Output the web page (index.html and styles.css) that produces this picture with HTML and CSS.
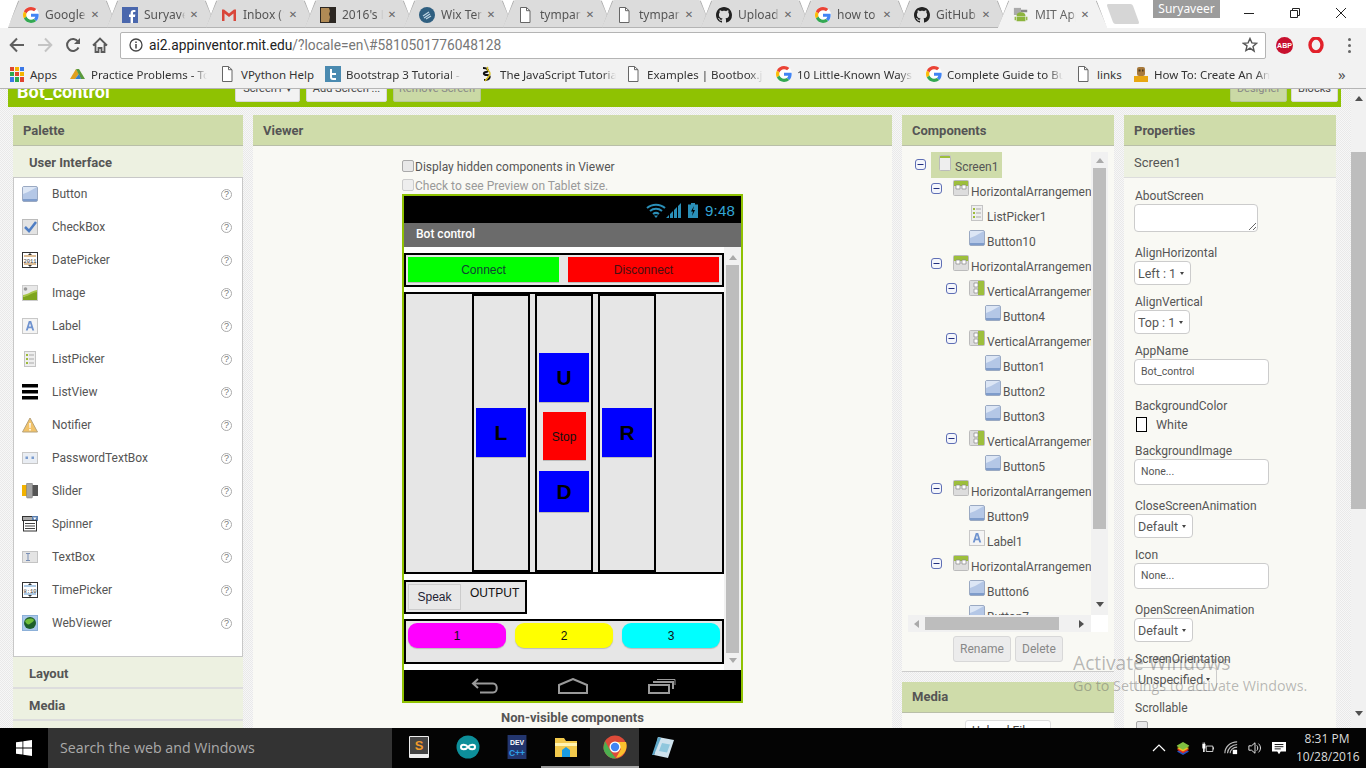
FILE: index.html
```html
<!DOCTYPE html>
<html lang="en">
<head>
<meta charset="utf-8">
<title>MIT App Inventor</title>
<link rel="stylesheet" href="styles.css">
</head>
<body>
<svg class="defs" width="0" height="0" aria-hidden="true">
  <symbol id="i-g" viewBox="0 0 48 48">
    <circle cx="24" cy="24" r="24" fill="#fff"/>
    <path fill="#EA4335" d="M24 9.5c3.54 0 6.71 1.22 9.21 3.6l6.85-6.85C35.9 2.38 30.47 0 24 0 14.62 0 6.51 5.38 2.56 13.22l7.98 6.19C12.43 13.72 17.74 9.5 24 9.5z"/>
    <path fill="#4285F4" d="M46.98 24.55c0-1.57-.15-3.09-.38-4.55H24v9.02h12.94c-.58 2.96-2.26 5.48-4.78 7.18l7.73 6c4.51-4.18 7.09-10.36 7.09-17.65z"/>
    <path fill="#FBBC05" d="M10.53 28.59c-.48-1.45-.76-2.99-.76-4.59s.27-3.14.76-4.59l-7.98-6.19C.92 16.46 0 20.12 0 24c0 3.88.92 7.54 2.56 10.78l7.97-6.19z"/>
    <path fill="#34A853" d="M24 48c6.48 0 11.93-2.13 15.89-5.81l-7.73-6c-2.15 1.45-4.92 2.3-8.16 2.3-6.26 0-11.57-4.22-13.47-9.91l-7.98 6.19C6.51 42.62 14.62 48 24 48z"/>
  </symbol>
  <symbol id="i-gh" viewBox="0 0 16 16"><path fill="#222" d="M8 0C3.58 0 0 3.58 0 8c0 3.54 2.29 6.53 5.47 7.59.4.07.55-.17.55-.38 0-.19-.01-.82-.01-1.49-2.01.37-2.53-.49-2.69-.94-.09-.23-.48-.94-.82-1.13-.28-.15-.68-.52-.01-.53.63-.01 1.08.58 1.23.82.72 1.21 1.87.87 2.33.66.07-.52.28-.87.51-1.07-1.78-.2-3.64-.89-3.64-3.95 0-.87.31-1.59.82-2.15-.08-.2-.36-1.02.08-2.12 0 0 .67-.21 2.2.82.64-.18 1.32-.27 2-.27.68 0 1.36.09 2 .27 1.53-1.04 2.2-.82 2.2-.82.44 1.1.16 1.92.08 2.12.51.56.82 1.27.82 2.15 0 3.07-1.87 3.75-3.65 3.95.29.25.54.73.54 1.48 0 1.07-.01 1.93-.01 2.2 0 .21.15.46.55.38A8.013 8.013 0 0016 8c0-4.42-3.58-8-8-8z"/></symbol>
  <symbol id="i-doc" viewBox="0 0 16 16"><path fill="#fff" stroke="#666" d="M2.500.5h6l3.500 3.200v11.800h-9.500z"/><path fill="none" stroke="#666" d="M8.500.5v3.200h3.500"/></symbol>
  <symbol id="i-fb" viewBox="0 0 16 16"><rect width="16" height="16" fill="#4a67ad"/><path fill="#fff" d="M11 16V10h2l.3-2.4H11V6.2c0-.7.3-1.1 1.2-1.1h1.2V3c-.3 0-1-.1-1.8-.1-1.8 0-3 1.1-3 3.100v1.600H7V10h1.600v6z"/></symbol>
  <symbol id="i-gm" viewBox="0 0 16 16"><path fill="#ddd" d="M1 3h14v11H1z"/><path fill="#d9473b" d="M1 2.500h2l5 4 5-4h2V14h-2.500V6.500L8 10 3.500 6.500V14H1z"/></symbol>
  <symbol id="i-2016" viewBox="0 0 16 16"><rect width="16" height="16" fill="#2c2722"/><path fill="#b08a55" d="M1 1h8l1 3-1 3 1 3-1 5H1z"/></symbol>
  <symbol id="i-wix" viewBox="0 0 16 16"><circle cx="8" cy="8" r="8" fill="#2f5f80"/><path fill="none" stroke="#bcd3e2" stroke-width="1.300" d="M4 9l6-4M5 11l6-4M7 12l5-3"/></symbol>
  <symbol id="i-droid" viewBox="0 0 18 18"><rect x="1" y="1" width="8" height="8" fill="#aaa"/><path fill="#888" d="M9 3h7v3H9z"/><path fill="#8cb43c" d="M4 10a5 4 0 0 1 10 0zM4 10.800h10V16H4zM1.800 11h1.500v4H1.800zM14.700 11h1.500v4h-1.500z"/></symbol>

  <symbol id="c-button" viewBox="0 0 16 16"><rect x=".5" y=".5" width="15" height="15" rx="1.500" fill="#b4c7e6" stroke="#9aa9c2"/><path fill="#dce6f5" d="M1 1h14L6 6 1 8z"/><path fill="#7e9ccb" d="M1 13h14v2H1z"/></symbol>
  <symbol id="c-check" viewBox="0 0 16 16"><rect x=".5" y=".5" width="15" height="15" fill="#e3e3e3" stroke="#bbb"/><path fill="none" stroke="#4f7ec4" stroke-width="2.500" d="M3 8l4 4 7-9"/></symbol>
  <symbol id="c-date" viewBox="0 0 16 16"><rect x=".5" y=".5" width="15" height="15" fill="#fff" stroke="#333"/><path stroke="#b97a2a" d="M2 4h12M2 12h12"/><path fill="#333" d="M6 3h4L8 1zM6 13h4l-2 2z"/><text x="8" y="10.500" class="svgt">2011</text></symbol>
  <symbol id="c-image" viewBox="0 0 16 16"><rect x=".5" y=".5" width="15" height="15" fill="#e8e8e8" stroke="#ccc"/><circle cx="3.500" cy="4" r="1.800" fill="#999"/><path fill="#7ea51e" d="M1 12c4-1 8-5 14-6v9H1z"/><path fill="#a8c64a" d="M1 10c4 0 8-4 14-5v2C9 8 5 12 1 12z"/></symbol>
  <symbol id="c-label" viewBox="0 0 16 16"><rect x=".5" y=".5" width="15" height="15" fill="#f4f4f4" stroke="#c8c8c8"/><path fill="#6f93cf" d="M6.800 3h2.400l3 9.500h-1.900l-.7-2.300H6.400l-.7 2.300H3.800zm1.200 2L6.900 8.500h2.200z"/></symbol>
  <symbol id="c-list" viewBox="0 0 16 16"><rect x="2.500" y=".5" width="11" height="15" fill="#eee" stroke="#c4c4c4"/><path fill="#9dbb3a" d="M4 3h2v2H4zM4 7h2v2H4zM4 11h2v2H4z"/><path fill="#aaa" d="M7 3.500h5v1H7zM7 7.500h5v1H7zM7 11.500h5v1H7z"/></symbol>
  <symbol id="c-lview" viewBox="0 0 16 16"><path fill="#000" d="M0 0h16v3.500H0zM0 6h16v3.500H0zM0 12h16v3.500H0z"/></symbol>
  <symbol id="c-notify" viewBox="0 0 16 16"><path fill="#f2c36a" stroke="#b6a27a" d="M8 1l7.500 14H.5z"/><path fill="#fff" d="M7.200 6h1.600l-.3 5h-1zM7.200 12h1.600v1.500H7.200z"/></symbol>
  <symbol id="c-pass" viewBox="0 0 16 16"><rect x=".5" y="2.500" width="15" height="11" fill="#e9edf3" stroke="#c8c8c8"/><path fill="#7a9ccf" d="M3.500 6.500h2.500v2.500H3.500zM9.500 6.500h2.500v2.500H9.500z"/></symbol>
  <symbol id="c-slider" viewBox="0 0 16 16"><path fill="#f2b200" d="M0 2h5v11H0z"/><path fill="#555" d="M10 2h6v11h-6z"/><rect x="4.500" y="0" width="6" height="15" rx="1" fill="#a4a4a4" stroke="#777" stroke-width=".5"/></symbol>
  <symbol id="c-spin" viewBox="0 0 16 16"><rect x=".5" y=".5" width="15" height="4" fill="#aaa" stroke="#333"/><rect x="10" y="0" width="6" height="5" fill="#5a7fb0"/><path fill="#fff" d="M11 1.500h3.500L12.800 4z"/><rect x="1.500" y="4.500" width="13" height="10.500" fill="#fff" stroke="#333"/><path stroke="#444" d="M3 7.500h10M3 10h10M3 12.500h10"/></symbol>
  <symbol id="c-text" viewBox="0 0 16 16"><rect x=".5" y="2.500" width="15" height="11" fill="#e4e4e4" stroke="#c4c4c4"/><path fill="none" stroke="#7a8fb5" d="M4 4.500h4M4 11.500h4M6 4.500v7"/></symbol>
  <symbol id="c-time" viewBox="0 0 16 16"><rect x=".5" y=".5" width="15" height="15" fill="#fff" stroke="#333"/><path stroke="#5b93c9" d="M2 4h12M2 12h12"/><path fill="#333" d="M6 3h4L8 1zM6 13h4l-2 2z"/><text x="8" y="10.500" class="svgt">8:10</text></symbol>
  <symbol id="c-web" viewBox="0 0 16 16"><rect x=".5" y=".5" width="15" height="15" fill="#a9c8ea" stroke="#8cb0d8"/><circle cx="8" cy="8" r="6" fill="#1e5f2a"/><path fill="#6fbe3a" d="M3 6c3-3 7-3 9-1-1 3-3 2-4 4-2 1-4 0-5-3z"/></symbol>
  <symbol id="c-harr" viewBox="0 0 16 16"><rect x=".5" y=".5" width="15" height="15" rx="1" fill="#ddd" stroke="#bbb"/><path fill="#9dbf3b" d="M1 1h14v5H1z"/><path fill="#fff" stroke="#888" stroke-width=".7" d="M3 5h4v4H3zM9 5h4v4H9z"/></symbol>
  <symbol id="c-varr" viewBox="0 0 16 16"><rect x=".5" y=".5" width="15" height="15" rx="1" fill="#ddd" stroke="#bbb"/><path fill="#9dbf3b" d="M9 1h6v14H9z"/><path fill="#fff" stroke="#888" stroke-width=".7" d="M5 3h4v4H5zM5 9h4v4H5z"/></symbol>
  <symbol id="c-screen" viewBox="0 0 12 16"><rect x=".5" y=".5" width="11" height="15" rx="1" fill="#eee" stroke="#bbb"/><path fill="#9dbf3b" d="M1 1h10v2H1z"/></symbol>
  <symbol id="t-minus" viewBox="0 0 11 11"><rect x=".5" y=".5" width="10" height="10" rx="2.500" fill="#f4f6fb" stroke="#5f6fb5"/><path stroke="#22307f" d="M2.500 5.500h6"/></symbol>
</svg>

<header class="chrome">
  <div class="tabstrip">
    <div class="tab"><svg class="fav"><use href="#i-g"/></svg><span class="tab-title">Google</span><span class="tab-x">✕</span></div>
    <div class="tab"><svg class="fav"><use href="#i-fb"/></svg><span class="tab-title">Suryaveer</span><span class="tab-x">✕</span></div>
    <div class="tab"><svg class="fav"><use href="#i-gm"/></svg><span class="tab-title">Inbox (1)</span><span class="tab-x">✕</span></div>
    <div class="tab"><svg class="fav"><use href="#i-2016"/></svg><span class="tab-title">2016's B</span><span class="tab-x">✕</span></div>
    <div class="tab"><svg class="fav"><use href="#i-wix"/></svg><span class="tab-title">Wix Temp</span><span class="tab-x">✕</span></div>
    <div class="tab"><svg class="fav"><use href="#i-doc"/></svg><span class="tab-title">tympanic</span><span class="tab-x">✕</span></div>
    <div class="tab"><svg class="fav"><use href="#i-doc"/></svg><span class="tab-title">tympanic</span><span class="tab-x">✕</span></div>
    <div class="tab"><svg class="fav"><use href="#i-gh"/></svg><span class="tab-title">Upload</span><span class="tab-x">✕</span></div>
    <div class="tab"><svg class="fav"><use href="#i-g"/></svg><span class="tab-title">how to u</span><span class="tab-x">✕</span></div>
    <div class="tab"><svg class="fav"><use href="#i-gh"/></svg><span class="tab-title">GitHub -</span><span class="tab-x">✕</span></div>
    <div class="tab tab-active"><svg class="fav"><use href="#i-droid"/></svg><span class="tab-title">MIT App</span><span class="tab-x">✕</span></div>
    <div class="newtab"></div>
    <div class="user">Suryaveer</div>
    <div class="winctl">
      <svg class="wc" viewBox="0 0 12 12"><path stroke="#222" d="M1 6.500h10"/></svg>
      <svg class="wc" viewBox="0 0 12 12"><path fill="none" stroke="#222" d="M1.500 3.500h7v7h-7zM3.500 3.500v-2h7v7h-2"/></svg>
      <svg class="wc" viewBox="0 0 12 12"><path stroke="#222" d="M1 1l10 10M11 1L1 11"/></svg>
    </div>
  </div>
  <div class="toolbar">
    <svg class="nav-ic nav-back" viewBox="0 0 16 16"><path fill="none" stroke="#5f5f5f" stroke-width="2" d="M15 8H2M8 1.500L1.700 8 8 14.500"/></svg>
    <svg class="nav-ic nav-fwd" viewBox="0 0 16 16"><path fill="none" stroke="#c4c4c4" stroke-width="2" d="M1 8h13M8 1.500L14.300 8 8 14.500"/></svg>
    <svg class="nav-ic nav-reload" viewBox="0 0 16 16"><path fill="none" stroke="#5a5a5a" stroke-width="2" d="M13.500 10.500A6 6 0 1 1 13 4.500"/><path fill="#5a5a5a" d="M15 1v6H9z"/></svg>
    <svg class="nav-ic nav-home" viewBox="0 0 16 16"><path fill="none" stroke="#5a5a5a" stroke-width="1.800" d="M1 8.500L8 1.500l7 7M3.500 7v8h3v-4h3v4h3V7"/></svg>
    <div class="omnibox">
      <svg class="info" viewBox="0 0 14 14"><circle cx="7" cy="7" r="6" fill="none" stroke="#444" stroke-width="1.300"/><path stroke="#444" stroke-width="1.500" d="M7 6v4.500M7 3.500v1.500"/></svg>
      <span class="url-host">ai2.appinventor.mit.edu</span><span class="url-rest">/?locale=en\#5810501776048128</span>
      <svg class="star" viewBox="0 0 16 16"><path fill="none" stroke="#555" stroke-width="1.400" d="M8 1.500l1.900 4.400 4.700.4-3.600 3.100 1.100 4.700L8 11.100l-4.100 2.500L5 8.900 1.400 6.300l4.700-.4z"/></svg>
    </div>
    <div class="ext">
      <span class="abp">ABP</span>
      <svg class="opera" viewBox="0 0 16 16"><ellipse cx="8" cy="8" rx="6" ry="7" fill="none" stroke="#e2212b" stroke-width="3.400"/></svg>
      <span class="menu3"><i></i><i></i><i></i></span>
    </div>
  </div>
  <div class="bookmarks">
    <div class="bm bm-apps"><span class="apps-grid"><i class="r"></i><i class="y"></i><i class="b"></i><i class="g"></i><i class="r"></i><i class="y"></i><i class="b"></i><i class="g"></i><i class="r"></i></span><span class="bm-t">Apps</span></div>
    <div class="bm bm-150"><svg class="fav" viewBox="0 0 16 16"><path fill="#e0a020" d="M0 13L6 3l3 5-4 5z"/><path fill="#5a9a3c" d="M6 3h3l6 10h-4z"/><path fill="#3b7fc4" d="M5 13l4-5 2 5z"/></svg><span class="bm-t fade">Practice Problems - Tc</span></div>
    <div class="bm bm-105"><svg class="fav"><use href="#i-doc"/></svg><span class="bm-t">VPython Help</span></div>
    <div class="bm bm-154"><svg class="fav" viewBox="0 0 16 16"><rect width="16" height="16" fill="#4a8ab0"/><path fill="none" stroke="#fff" stroke-width="2" d="M6 3v8c0 1.500 1 2 2 2h3M6 8h5"/></svg><span class="bm-t fade">Bootstrap 3 Tutorial -</span></div>
    <div class="bm bm-147"><svg class="fav" viewBox="0 0 16 16"><path fill="none" stroke="#111" stroke-width="2" d="M4 2c6 0 6 4 3 4s-3 3 1 3 4 5-3 5"/><path fill="none" stroke="#d8c020" stroke-width="1.500" d="M9 1c-3 3 3 4 2 7s-3 4-5 7"/></svg><span class="bm-t fade">The JavaScript Tutoria</span></div>
    <div class="bm bm-150"><svg class="fav"><use href="#i-doc"/></svg><span class="bm-t fade">Examples | Bootbox.js-</span></div>
    <div class="bm bm-150"><svg class="fav"><use href="#i-g"/></svg><span class="bm-t fade">10 Little-Known Ways</span></div>
    <div class="bm bm-150"><svg class="fav"><use href="#i-g"/></svg><span class="bm-t fade">Complete Guide to Bu</span></div>
    <div class="bm bm-57"><svg class="fav"><use href="#i-doc"/></svg><span class="bm-t">links</span></div>
    <div class="bm bm-190"><svg class="fav" viewBox="0 0 16 16"><path fill="#e8a712" d="M1 10h14v6H1z"/><rect x="4" y="1" width="8" height="9" rx="2" fill="#a87a3c"/><path fill="#4d3a1e" d="M5.500 3.500h2v2h-2zM9 3.500h1.500v2H9z"/></svg><span class="bm-t fade">How To: Create An An</span></div>
    <span class="chev">»</span>
  </div>
</header>

<main class="app">
  <div class="page">
    <div class="topbar">
      <span class="project">Bot_control</span>
      <span class="tb-btn tb-screen">Screen1 ▾</span>
      <span class="tb-btn tb-add">Add Screen ...</span>
      <span class="tb-btn tb-remove tb-off">Remove Screen</span>
      <span class="tb-spacer"></span>
      <span class="tb-btn tb-designer tb-off">Designer</span>
      <span class="tb-btn tb-blocks">Blocks</span>
    </div>
    <div class="columns">
      <section class="col col-palette">
        <h2 class="panel-h">Palette</h2>
        <h3 class="sec-h">User Interface</h3>
        <ul class="palette">
          <li><svg class="pi"><use href="#c-button"/></svg><span>Button</span><b class="help">?</b></li>
          <li><svg class="pi"><use href="#c-check"/></svg><span>CheckBox</span><b class="help">?</b></li>
          <li><svg class="pi"><use href="#c-date"/></svg><span>DatePicker</span><b class="help">?</b></li>
          <li><svg class="pi"><use href="#c-image"/></svg><span>Image</span><b class="help">?</b></li>
          <li><svg class="pi"><use href="#c-label"/></svg><span>Label</span><b class="help">?</b></li>
          <li><svg class="pi"><use href="#c-list"/></svg><span>ListPicker</span><b class="help">?</b></li>
          <li><svg class="pi"><use href="#c-lview"/></svg><span>ListView</span><b class="help">?</b></li>
          <li><svg class="pi"><use href="#c-notify"/></svg><span>Notifier</span><b class="help">?</b></li>
          <li><svg class="pi"><use href="#c-pass"/></svg><span>PasswordTextBox</span><b class="help">?</b></li>
          <li><svg class="pi"><use href="#c-slider"/></svg><span>Slider</span><b class="help">?</b></li>
          <li><svg class="pi"><use href="#c-spin"/></svg><span>Spinner</span><b class="help">?</b></li>
          <li><svg class="pi"><use href="#c-text"/></svg><span>TextBox</span><b class="help">?</b></li>
          <li><svg class="pi"><use href="#c-time"/></svg><span>TimePicker</span><b class="help">?</b></li>
          <li><svg class="pi"><use href="#c-web"/></svg><span>WebViewer</span><b class="help">?</b></li>
        </ul>
        <h3 class="sec-h sec-more">Layout</h3>
        <h3 class="sec-h sec-more">Media</h3>
        <h3 class="sec-h sec-more">Drawing and Animation</h3>
      </section>

      <section class="col col-viewer">
        <h2 class="panel-h">Viewer</h2>
        <div class="viewer-body">
          <label class="cbrow"><span class="cb"></span>Display hidden components in Viewer</label>
          <label class="cbrow cbrow-off"><span class="cb"></span>Check to see Preview on Tablet size.</label>
          <div class="phone">
            <div class="ph-status">
              <svg class="ph-wifi" viewBox="0 0 20 15"><path fill="none" stroke="#2a8fb8" stroke-width="2" d="M1 5c5-4.500 13-4.500 18 0M4 8c3.500-3 8.500-3 12 0M7 11c2-1.500 4-1.500 6 0"/><path fill="#2a8fb8" d="M10 15l-2-2.500h4z"/></svg>
              <svg class="ph-sig" viewBox="0 0 15 15"><path fill="#2a8fb8" d="M0 15l3-3v3zM4 15v-4l3-3v7zM8 15V7l3-3v11zM12 15V3l3-3v15z"/></svg>
              <svg class="ph-bat" viewBox="0 0 10 15"><path fill="#2a8fb8" d="M3 0h4v1.500h3V15H0V1.500h3z"/><path fill="#000" d="M6 3L3 8.500h2L4 13l3-6H5z"/></svg>
              <span class="ph-time">9:48</span>
            </div>
            <div class="ph-title">Bot control</div>
            <div class="ph-screen">
              <div class="ph-content">
                <div class="ha ha-1">
                  <span class="pb pb-green">Connect</span>
                  <span class="pb pb-red">Disconnect</span>
                </div>
                <div class="ha ha-2">
                  <div class="va va-1"><span class="pb pb-blue pb-sq">L</span></div>
                  <div class="va va-2">
                    <span class="pb pb-blue pb-u">U</span>
                    <span class="pb pb-redsq">Stop</span>
                    <span class="pb pb-blue pb-d">D</span>
                  </div>
                  <div class="va va-3"><span class="pb pb-blue pb-sq">R</span></div>
                </div>
                <div class="ha ha-3">
                  <span class="pb pb-speak">Speak</span>
                  <span class="ph-output">OUTPUT</span>
                </div>
                <div class="ha ha-4">
                  <span class="pb pb-round pb-mag">1</span>
                  <span class="pb pb-round pb-yel">2</span>
                  <span class="pb pb-round pb-cya">3</span>
                </div>
              </div>
              <div class="ph-scroll">
                <i class="tri tri-up"></i>
                <i class="ph-thumb"></i>
                <i class="tri tri-down"></i>
              </div>
            </div>
            <div class="ph-nav">
              <svg class="nv-back" viewBox="0 0 28 16"><path fill="none" stroke="#9a9a9a" stroke-width="2" d="M7 1L2 5.500 7 10M2 5.500h20c5 0 5 9 0 9H9"/></svg>
              <svg class="nv-home" viewBox="0 0 30 16"><path fill="none" stroke="#9a9a9a" stroke-width="2" d="M1 7L15 1l14 6v8H1z"/></svg>
              <svg class="nv-rec" viewBox="0 0 28 16"><path fill="none" stroke="#9a9a9a" stroke-width="2" d="M1 7h20v8H1zM5 4h20v7"/><path fill="none" stroke="#9a9a9a" stroke-width="1" d="M9 1.500h18V7"/></svg>
            </div>
          </div>
          <div class="nonvis">Non-visible components</div>
        </div>
      </section>

      <div class="col col-comp">
        <section class="comp-panel">
          <h2 class="panel-h">Components</h2>
          <div class="tree-wrap">
            <div class="tree">
              <div class="row row-root"><svg class="tog"><use href="#t-minus"/></svg><span class="root-hl"><svg class="ci-screen"><use href="#c-screen"/></svg><span>Screen1</span></span></div>
              <div class="row p1"><svg class="tog"><use href="#t-minus"/></svg><svg class="ci"><use href="#c-harr"/></svg><span>HorizontalArrangement1</span></div>
              <div class="row l2"><svg class="ci"><use href="#c-list"/></svg><span>ListPicker1</span></div>
              <div class="row l2"><svg class="ci"><use href="#c-button"/></svg><span>Button10</span></div>
              <div class="row p1"><svg class="tog"><use href="#t-minus"/></svg><svg class="ci"><use href="#c-harr"/></svg><span>HorizontalArrangement2</span></div>
              <div class="row p2"><svg class="tog"><use href="#t-minus"/></svg><svg class="ci"><use href="#c-varr"/></svg><span>VerticalArrangement1</span></div>
              <div class="row l3"><svg class="ci"><use href="#c-button"/></svg><span>Button4</span></div>
              <div class="row p2"><svg class="tog"><use href="#t-minus"/></svg><svg class="ci"><use href="#c-varr"/></svg><span>VerticalArrangement2</span></div>
              <div class="row l3"><svg class="ci"><use href="#c-button"/></svg><span>Button1</span></div>
              <div class="row l3"><svg class="ci"><use href="#c-button"/></svg><span>Button2</span></div>
              <div class="row l3"><svg class="ci"><use href="#c-button"/></svg><span>Button3</span></div>
              <div class="row p2"><svg class="tog"><use href="#t-minus"/></svg><svg class="ci"><use href="#c-varr"/></svg><span>VerticalArrangement3</span></div>
              <div class="row l3"><svg class="ci"><use href="#c-button"/></svg><span>Button5</span></div>
              <div class="row p1"><svg class="tog"><use href="#t-minus"/></svg><svg class="ci"><use href="#c-harr"/></svg><span>HorizontalArrangement3</span></div>
              <div class="row l2"><svg class="ci"><use href="#c-button"/></svg><span>Button9</span></div>
              <div class="row l2"><svg class="ci"><use href="#c-label"/></svg><span>Label1</span></div>
              <div class="row p1"><svg class="tog"><use href="#t-minus"/></svg><svg class="ci"><use href="#c-harr"/></svg><span>HorizontalArrangement4</span></div>
              <div class="row l2"><svg class="ci"><use href="#c-button"/></svg><span>Button6</span></div>
              <div class="row l2"><svg class="ci"><use href="#c-button"/></svg><span>Button7</span></div>
            </div>
            <div class="vbar"><i class="tri tri-up"></i><i class="vthumb"></i><i class="tri tri-down tri-dark"></i></div>
            <div class="hbar"><i class="tri tri-left"></i><i class="hthumb"></i><i class="tri tri-right"></i></div>
            <div class="corner"></div>
          </div>
          <div class="comp-btns"><span class="off-btn btn-rename">Rename</span><span class="off-btn btn-delete">Delete</span></div>
        </section>
        <section class="media-panel">
          <h2 class="panel-h panel-h-media">Media</h2>
          <div class="media-body"><span class="upload">Upload File ...</span></div>
        </section>
      </div>

      <section class="col col-props">
        <h2 class="panel-h">Properties</h2>
        <h3 class="sec-h sec-plain">Screen1</h3>
        <div class="props">
          <div class="prop p-about"><label>AboutScreen</label><div class="ctl ctl-area"><svg class="grip" viewBox="0 0 8 8"><path stroke="#666" d="M1 8l7-7M5 8l3-3"/></svg></div></div>
          <div class="prop p-sel"><label>AlignHorizontal</label><div class="ctl ctl-sel w56">Left : 1<i class="caret"></i></div></div>
          <div class="prop p-sel"><label>AlignVertical</label><div class="ctl ctl-sel w55">Top : 1<i class="caret"></i></div></div>
          <div class="prop p-in"><label>AppName</label><div class="ctl ctl-in">Bot_control</div></div>
          <div class="prop p-color"><label>BackgroundColor</label><div class="colorrow"><i class="swatch"></i>White</div></div>
          <div class="prop p-in"><label>BackgroundImage</label><div class="ctl ctl-in">None...</div></div>
          <div class="prop p-sel"><label>CloseScreenAnimation</label><div class="ctl ctl-sel w58">Default<i class="caret"></i></div></div>
          <div class="prop p-in"><label>Icon</label><div class="ctl ctl-in">None...</div></div>
          <div class="prop p-sel"><label>OpenScreenAnimation</label><div class="ctl ctl-sel w58">Default<i class="caret"></i></div></div>
          <div class="prop p-sel"><label>ScreenOrientation</label><div class="ctl ctl-sel w82">Unspecified<i class="caret"></i></div></div>
          <div class="prop p-last"><label>Scrollable</label><span class="cb cb-prop"></span></div>
        </div>
      </section>
    </div>
  </div>
  <div class="pagebar"><i class="tri tri-up tri-dark"></i><i class="pagethumb"></i><i class="tri tri-down tri-dark"></i></div>
  <div class="activate"><div class="act-1">Activate Windows</div><div class="act-2">Go to Settings to activate Windows.</div></div>
</main>

<footer class="taskbar">
  <div class="start"><svg class="winlogo" viewBox="0 0 16 16"><path fill="#fff" d="M0 2.300l6.500-.9v6.200H0zM7.300 1.300L16 0v7.600H7.300zM0 8.400h6.500v6.200L0 13.700zM7.300 8.400H16V16l-8.700-1.300z"/></svg></div>
  <div class="search">Search the web and Windows</div>
  <div class="tb-apps">
    <div class="tapp"><svg viewBox="0 0 22 24"><rect x="1" y="1" width="20" height="22" rx="1" fill="#eee"/><rect x="2" y="2" width="18" height="17" fill="#454545"/><text x="11" y="15" class="svgs">S</text></svg></div>
    <div class="tapp"><svg viewBox="0 0 24 24"><circle cx="12" cy="12" r="11.500" fill="#0d8f9a"/><path fill="none" stroke="#fff" stroke-width="2" d="M12 12c-2-3-7-3-7 0s5 3 7 0 7-3 7 0-5 3-7 0z"/></svg></div>
    <div class="tapp"><svg viewBox="0 0 22 28"><rect width="22" height="28" fill="#23366e"/><text x="11" y="12" class="svgd">DEV</text><text x="11" y="24" class="svgc">C++</text></svg></div>
    <div class="tapp tapp-on"><svg viewBox="0 0 24 24"><path fill="#f2c94c" d="M1 3h9l2 3h11v16H1z"/><path fill="#fff3b0" d="M1 8h22v3H1z"/><path fill="#1a9be0" d="M8 22v-7l4-3 4 3v7z"/></svg></div>
    <div class="tapp tapp-act"><svg viewBox="0 0 24 24"><circle cx="12" cy="12" r="11.500" fill="#dd4b39"/><path fill="#4caf50" d="M2 6l6 11 5 6.500C5 24 0 17 .5 12z"/><path fill="#fbc02d" d="M12 7h11c2 6-1 14-10 16l5-9z"/><circle cx="12" cy="12" r="5.500" fill="#fff"/><circle cx="12" cy="12" r="4.200" fill="#4285f4"/></svg></div>
    <div class="tapp"><svg viewBox="0 0 24 24"><path fill="#cfe3ee" d="M6 2l16 3-6 18-14-3z"/><path fill="#5fa8c9" d="M6 2l3 1-7 17H0z"/><path fill="#8fc7dd" d="M10 8l8 1.500-3 8-8-1.500z"/></svg></div>
  </div>
  <div class="tray">
    <svg class="tr" viewBox="0 0 14 14"><path fill="none" stroke="#fff" stroke-width="1.200" d="M1 10l6-6 6 6"/></svg>
    <svg class="tr" viewBox="0 0 16 16"><path fill="#2050c0" d="M8 9l7 3-7 4-7-4z"/><path fill="#e03020" d="M8 7l7 3-7 4-7-4z"/><path fill="#f0c020" d="M8 5l7 3-7 4-7-4z"/><path fill="#80c040" d="M8 1l7 4v1l-7 4-7-4V5z"/></svg>
    <svg class="tr" viewBox="0 0 18 14"><path fill="none" stroke="#fff" d="M8 4.500h8.500v7H8z"/><path fill="#fff" d="M17 6h1v3h-1zM3 2h4v5.500H6V12H4V7.500H3zM3.500 0h1v2h-1zM5.500 0h1v2h-1z"/></svg>
    <svg class="tr" viewBox="0 0 16 16"><path fill="none" stroke="#bbb" stroke-width="1.300" d="M1 14C1 7 7 1 15 1M4 14c0-5 5-10 11-10M7 14c0-3 3-7 8-7"/><path fill="#fff" d="M10 10h5v5h-5z"/></svg>
    <svg class="tr" viewBox="0 0 16 16"><path fill="none" stroke="#fff" d="M1 5.500h3L8 2v12l-4-3.500H1z"/><path fill="none" stroke="#fff" d="M10 5c1.500 1.500 1.500 4.500 0 6M12 3c3 3 3 7 0 10"/></svg>
    <svg class="tr" viewBox="0 0 16 16"><path fill="#fff" d="M0 1h16v11H10l-2 3-2-3H0z"/><path stroke="#000" d="M3 4h10M3 6.500h10M3 9h7"/></svg>
    <div class="clock"><div>8:31 PM</div><div>10/28/2016</div></div>
  </div>
</footer>
</body>
</html>
```

FILE: styles.css
```css
* { box-sizing: border-box; }
html, body { margin: 0; height: 100%; }
body {
  width: 1366px; height: 768px; overflow: hidden;
  display: flex; flex-direction: column;
  font-family: Roboto, "Liberation Sans", sans-serif;
  color: #444; background: #fff;
}
.defs { position: absolute; }
.svgt { font: 5.5px "Liberation Mono", monospace; text-anchor: middle; fill: #333; }
.svgs { font: bold 13px "Liberation Sans", sans-serif; text-anchor: middle; fill: #f09a2a; }
.svgd { font: bold 8px "Liberation Sans", sans-serif; text-anchor: middle; fill: #fff; }
.svgc { font: bold 10px "Liberation Sans", sans-serif; text-anchor: middle; fill: #2ea0e8; }
ul, h2, h3 { margin: 0; padding: 0; list-style: none; }

/* browser chrome */
.chrome { flex: none; height: 89px; display: flex; flex-direction: column; font-family: "Noto Sans", "Open Sans", sans-serif; }
.tabstrip { height: 28px; display: flex; padding-left: 6px; background: #fff; position: relative; }
.tab {
  width: 113px; height: 28px; margin-right: -14px; padding: 2px 0 0 17px;
  display: flex; align-items: center; position: relative;
  font-size: 12px; color: #555;
  background: #dcdcdc;
  clip-path: polygon(0 100%, 2px 100%, 12px 1px, 14px 0, 99px 0, 101px 1px, 111px 100%, 113px 100%);
  border-bottom: 1px solid #b4b4b4;
}
.tab::after {
  content: ""; position: absolute; inset: 0; pointer-events: none;
  background:
    linear-gradient(to bottom right, transparent calc(50% - 1px), #b0b0b0 50%, transparent calc(50% + 1px)) 1px 0 / 12px 28px no-repeat,
    linear-gradient(to bottom left, transparent calc(50% - 1px), #b0b0b0 50%, transparent calc(50% + 1px)) 100px 0 / 12px 28px no-repeat;
}
.tab-active { background: #f2f2f2; z-index: 2; border-bottom-color: #f2f2f2; color: #666; }
.fav { width: 16px; height: 16px; flex: none; }
.tab-title { width: 41px; margin-left: 6px; overflow: hidden; white-space: nowrap; -webkit-mask-image: linear-gradient(to right, #000 88%, transparent); mask-image: linear-gradient(to right, #000 88%, transparent); }
.tab-x { margin-left: 3px; font-size: 10px; color: #666; width: 12px; text-align: center; font-family: "DejaVu Sans", sans-serif; }
.newtab {
  width: 26px; height: 20px; margin: 4px 0 0 15px; flex: none;
  background: #d6d6d6; transform: skewX(20deg); border-radius: 2px;
}
.user {
  width: 67px; height: 18px; margin-left: 17px; flex: none;
  background: #9c9c9c; color: #fff; font-size: 12px; line-height: 17px; text-align: center;
}
.winctl { display: flex; margin-left: 23px; gap: 34px; padding-top: 7px; }
.wc { width: 12px; height: 12px; }
.toolbar {
  height: 34px; background: #f2f2f2; display: flex; align-items: center;
  padding-left: 9px;
}
.nav-ic { width: 16px; height: 16px; flex: none; }
.nav-fwd { margin-left: 12px; }
.nav-reload { margin-left: 12px; }
.nav-home { margin-left: 11px; }
.omnibox {
  width: 1146px; height: 27px; margin-left: 12px; background: #fff;
  border: 1px solid #b4b4b4; border-radius: 2px;
  display: flex; align-items: center; font-size: 13.750px; padding-left: 8px;
  font-family: Roboto, "Liberation Sans", sans-serif; color: #222;
}
.info { width: 14px; height: 14px; margin-right: 6px; }
.url-rest { color: #777; }
.star { width: 16px; height: 16px; margin-left: auto; margin-right: 7px; }
.ext { display: flex; align-items: center; margin-left: 10px; }
.abp {
  width: 17px; height: 17px; border-radius: 50%; background: #c8102e; color: #fff;
  font: bold 7px/17px "Liberation Sans", sans-serif; text-align: center;
}
.opera { width: 16px; height: 16px; margin-left: 15px; }
.menu3 { display: flex; flex-direction: column; gap: 3px; margin-left: 24px; }
.menu3 i { width: 3px; height: 3px; background: #666; border-radius: 50%; }
.bookmarks {
  height: 27px; background: #f2f2f2; border-bottom: 1px solid #b5b5b5;
  display: flex; align-items: center; padding: 0 0 2px 10px; font-size: 11.500px; color: #333;
  position: relative;
}
.bm { display: flex; align-items: center; flex: none; }
.bm-t { margin-left: 5px; white-space: nowrap; }
.fade { width: 116px; overflow: hidden; -webkit-mask-image: linear-gradient(to right, #000 88%, transparent); mask-image: linear-gradient(to right, #000 88%, transparent); }
.bm-apps { width: 60px; }
.bm-150 { width: 150px; } .bm-105 { width: 105px; } .bm-154 { width: 154px; }
.bm-147 { width: 147px; } .bm-57 { width: 57px; } .bm-190 { width: 190px; }
.apps-grid { width: 15px; height: 15px; display: grid; grid-template-columns: repeat(3, 4px); gap: 1px; }
.apps-grid i { display: block; }
.r { background: #e0452f; } .y { background: #f4b400; } .b { background: #3b78e7; } .g { background: #2da94f; }
.chev { margin-left: 15px; font-size: 15px; color: #555; line-height: 1; }

/* app */
.app { flex: 1; min-height: 0; display: flex; position: relative; overflow: hidden; }
.page {
  width: 1351px; height: 639px; overflow: hidden;
  background: repeating-conic-gradient(#e9e9e9 0 25%, #f7f7f7 0 50%) 0 0 / 2px 2px;
}
.topbar {
  height: 18px; margin: 0 10px 0 8px; background: #8fc202;
  display: flex; align-items: flex-end; padding-left: 9px; overflow: hidden; position: relative;
}
.project { font-size: 18px; font-weight: 700; color: #fff; width: 218px; height: 18px; line-height: 6px; flex: none; }
.tb-btn {
  height: 24px; margin-top: -10px; margin-bottom: 5px; background: #f2f2f2;
  border: 1px solid #d8d8d8; border-radius: 2px;
  font-size: 11px; line-height: 20px; text-align: center; color: #444; flex: none;
  align-self: flex-end; white-space: nowrap; overflow: hidden;
}
.tb-off { background: #cad9a5; color: #888; border-color: #b7c897; }
.tb-screen { width: 65px; } .tb-add { width: 81px; margin-left: 6px; } .tb-remove { width: 88px; margin-left: 6px; }
.tb-spacer { flex: 1; }
.tb-designer { width: 57px; } .tb-blocks { width: 47px; margin-left: 4px; margin-right: 3px; }
.columns { display: flex; gap: 10px; padding: 8px 0 0 13px; height: 621px; }
.col { flex: none; overflow: hidden; }
.panel-h {
  height: 31px; background: #cfdcaa; border-bottom: 1px solid #b9bfa8; padding-left: 10px;
  font-size: 13px; font-weight: 700; line-height: 31px; color: #555;
}
.panel-h-media { line-height: 29px; }
.sec-h {
  height: 32px; background: #edf1e1; border-bottom: 1px solid #ddd; padding-left: 16px;
  font-size: 13px; font-weight: 700; line-height: 33px; color: #555;
}
.col-palette { width: 230px; height: 613px; }
.palette { height: 480px; background: #fff; border: 1px solid #c8c8c8; margin-top: -1px; }
.palette li { height: 33px; display: flex; align-items: center; padding: 0 0 1px 8px; font-size: 12px; color: #555; }
.palette li span { margin-top: -1px; }
.pi { width: 16px; height: 16px; margin-right: 14px; flex: none; }
.help {
  margin-left: auto; margin-right: 10px; width: 11px; height: 11px; border: 1px solid #aaa; border-radius: 50%;
  font: 9px/9px "Liberation Sans", sans-serif; color: #777; text-align: center;
}
.sec-more { height: 32px; border-bottom: 2px solid #ddd; }
.col-viewer { width: 639px; height: 613px; }
.viewer-body { height: 582px; background: #f9f9f4; padding: 10px 0 0 149px; font-size: 12px; color: #555; }
.cbrow { height: 21px; display: flex; align-items: center; white-space: nowrap; }
.cbrow-off { color: #999; height: 18px; }
.cb {
  width: 12px; height: 12px; flex: none; border: 1px solid #a9a9a9; border-radius: 2px; background: #e8e8e8; margin-right: 1px;
  margin-top: -2px;
}
.cbrow-off .cb { border-color: #ccc; background: #eee; }
.phone { width: 341px; height: 509px; margin-top: -1px; border: 2px solid #8fc202; background: #fff; display: flex; flex-direction: column; }
.ph-status { height: 27px; background: #000; display: flex; align-items: center; justify-content: flex-end; padding: 2px 6px 0 0; flex: none; }
.ph-wifi { width: 20px; height: 15px; }
.ph-sig { width: 15px; height: 15px; }
.ph-bat { width: 10px; height: 15px; margin-left: 7px; }
.ph-time { font: 15px "Liberation Sans", sans-serif; color: #33a5d5; margin-left: 7px; letter-spacing: .2px; }
.ph-title { height: 24px; background: #6b6b6b; color: #fff; font-size: 12px; font-weight: 500; line-height: 22px; padding-left: 12px; flex: none; }
.ph-screen { height: 423px; display: flex; flex: none; }
.ph-content { width: 320px; padding-top: 6px; display: flex; flex-direction: column; font-family: "Liberation Sans", sans-serif; color: #111; }
.ha { border: 2px solid #000; background: #e6e6e6; display: flex; flex: none; }
.ha-1 { height: 34px; padding: 2px; gap: 9px; margin-bottom: 5px; }
.ha-2 { height: 282px; padding: 0 0 0 66px; margin-bottom: 6px; gap: 5px; }
.ha-3 { width: 123px; height: 34px; padding: 2px; margin-bottom: 5px; }
.ha-4 { height: 45px; padding: 2px; gap: 9px; align-items: flex-start; }
.pb { display: flex; align-items: center; justify-content: center; font-size: 12px; flex: none; border-bottom: 1px solid #bbb; }
.pb-green { width: 151px; height: 26px; background: #00ff00; color: #143; }
.pb-red { width: 151px; height: 26px; background: #ff0000; color: #411; }
.va { width: 58px; height: 278px; border: 2px solid #000; display: flex; flex-direction: column; align-items: center; justify-content: center; flex: none; }
.pb-blue { width: 50px; background: #0000ff; color: #000; font-size: 21px; font-weight: 700; }
.pb-sq { height: 50px; }
.pb-u { height: 50px; }
.pb-d { height: 42px; }
.pb-redsq { width: 43px; height: 49px; margin: 9px 0 10px; background: #ff0000; color: #111; padding-top: 1px; font-size: 12px; }
.pb-speak { width: 53px; height: 26px; background: #e8e8e8; border: 1px solid #ccc; color: #223; }
.ph-output { font-size: 12px; margin: 2px 0 0 9px; }
.pb-round { width: 98px; height: 25px; border-radius: 9px; font-size: 12px; border-bottom: 0; box-shadow: 0 1px 1px #bbb; color: #111; }
.pb-mag { background: #ff00ff; } .pb-yel { background: #ffff00; } .pb-cya { background: #00ffff; }
.ph-scroll { width: 17px; background: #f1f1f1; display: flex; flex-direction: column; align-items: center; padding-top: 8px; }
.ph-thumb { width: 13px; height: 388px; background: #bdbdbd; margin-top: 5px; }
.tri { display: block; width: 0; height: 0; border: 4px solid transparent; flex: none; }
.tri-up { border-top: 0; border-bottom: 5px solid #aaa; }
.tri-down { border-bottom: 0; border-top: 5px solid #aaa; }
.ph-scroll .tri-down { margin-top: 5px; }
.tri-dark.tri-up { border-bottom-color: #505050; }
.tri-dark.tri-down { border-top-color: #505050; }
.tri-left { border-left: 0; border-right: 5px solid #aaa; }
.tri-right { border-right: 0; border-left: 5px solid #505050; }
.ph-nav { height: 31px; background: #000; flex: none; display: flex; align-items: center; padding-left: 67px; }
.nv-back { width: 28px; height: 16px; }
.nv-home { width: 30px; height: 16px; margin-left: 59px; }
.nv-rec { width: 28px; height: 16px; margin-left: 60px; }
.nonvis { width: 341px; text-align: center; font-size: 13px; font-weight: 700; color: #555; margin-top: 7px; }

.col-comp { width: 212px; height: 613px; display: flex; flex-direction: column; gap: 10px; }
.comp-panel { height: 557px; background: #f9f9f4; flex: none; border-bottom: 1px solid #ccc; }
.tree-wrap { display: grid; grid-template-columns: 183px 17px; grid-template-rows: 463px 17px; margin: 6px 0 0 6px; }
.tree { overflow: hidden; font-size: 12px; color: #555; white-space: nowrap; }
.row { height: 25px; display: flex; align-items: flex-start; }
.row span { padding-top: 7px; }
.row-root { height: 26px; padding-left: 7px; }
.row-root .tog { margin-right: 5px; margin-top: 7px; }
.root-hl { width: 71px; height: 26px; background: #cfdcaa; display: flex; align-items: flex-start; padding: 0 0 0 8px !important; }
.ci-screen { width: 12px; height: 16px; margin-top: 3px; margin-right: 4px; flex: none; }
.root-hl span { padding-top: 8px; }
.tog { width: 11px; height: 11px; flex: none; margin-top: 5px; }
.ci { width: 16px; height: 16px; flex: none; margin-top: 2px; margin-right: 2px; }
.p1 { padding-left: 23px; }
.p1 .tog { margin-right: 11px; }
.p2 { padding-left: 38px; }
.p2 .tog { margin-right: 12px; }
.l2 { padding-left: 61px; }
.l3 { padding-left: 77px; }
.vbar { background: #f1f1f1; display: flex; flex-direction: column; align-items: center; padding-top: 6px; }
.vthumb { width: 13px; height: 361px; background: #bdbdbd; margin-top: 5px; }
.vbar .tri-down { margin-top: 73px; }
.hbar { background: #f1f1f1; display: flex; align-items: center; padding-left: 6px; }
.hthumb { width: 134px; height: 13px; background: #bdbdbd; margin-left: 6px; }
.hbar .tri-right { margin-left: 20px; }
.corner { background: #fff; }
.comp-btns { display: flex; gap: 4px; margin: 4px 0 0 51px; }
.off-btn { height: 26px; background: #ececec; border: 1px solid #d8d8d8; border-radius: 3px; font-size: 12px; line-height: 24px; color: #888; text-align: center; }
.btn-rename { width: 58px; } .btn-delete { width: 48px; }
.media-panel { background: #f9f9f4; flex: 1; }
.media-body { padding: 7px 0 0 63px; }
.upload { display: block; width: 86px; height: 26px; background: #fff; border: 1px solid #ddd; border-radius: 3px; font-size: 12px; line-height: 20px; text-align: center; color: #444; }

.col-props { width: 212px; height: 613px; background: #f9f9f4; }
.sec-plain { font-weight: 400; padding-left: 10px; color: #555; }
.props { padding: 11px 0 0 10px; font-size: 12px; color: #555; }
.prop label { display: block; height: 14px; line-height: 14px; padding-left: 1px; }
.ctl { background: #fff; border: 1px solid #ccc; border-radius: 4px; }
.p-about { height: 57px; }
.p-sel { height: 49px; }
.p-in { height: 55px; }
.p-color { height: 45px; }
.ctl-area { width: 124px; height: 28px; margin-top: 1px; position: relative; }
.grip { position: absolute; right: 1px; bottom: 1px; width: 8px; height: 8px; }
.ctl-sel { height: 24px; margin-top: 1px; display: flex; align-items: center; padding-left: 3px; font-size: 12.500px; color: #555; }
.w56 { width: 57px; } .w55 { width: 56px; } .w58 { width: 59px; } .w82 { width: 83px; background: transparent; }
.caret { margin-left: auto; margin-right: 6px; border: 2.500px solid transparent; border-top: 3.500px solid #444; border-bottom: 0; }
.ctl-in { width: 135px; height: 26px; margin-top: 1px; font-size: 10.500px; line-height: 24px; padding-left: 6px; color: #555; }
.colorrow { display: flex; align-items: center; height: 18px; font-size: 12.500px; margin-top: 2px; }
.swatch { width: 11px; height: 15px; background: #fff; border: 1px solid #000; margin: 0 9px 0 2px; }
.p-last .cb-prop { display: block; margin: 6px 0 0 2px; }
.pagebar { width: 15px; background: #f1f1f1; display: flex; flex-direction: column; align-items: center; padding-top: 7px; }
.pagethumb { width: 15px; height: 357px; background: #bdbdbd; margin-top: 51px; }
.pagebar .tri-down { margin-top: 202px; }
.activate { position: absolute; left: 1073px; top: 562px; color: rgba(90, 90, 90, .42); font-family: "Open Sans", sans-serif; pointer-events: none; }
.act-1 { font-size: 19.200px; line-height: 23px; }
.act-2 { font-size: 14.300px; line-height: 24px; white-space: nowrap; }

/* taskbar */
.taskbar { flex: none; height: 40px; background: #040404; display: flex; color: #fff; position: relative; }
.start { width: 48px; display: flex; align-items: center; justify-content: center; background: #000; flex: none; }
.winlogo { width: 16px; height: 16px; }
.search { width: 344px; background: #333; color: #aaa; font-family: "Open Sans", sans-serif; font-size: 14.200px; line-height: 40px; padding-left: 12px; flex: none; }
.tb-apps { display: flex; padding-left: 2px; }
.tapp { width: 49px; display: flex; align-items: center; justify-content: center; border-bottom: 2px solid transparent; }
.tapp svg { width: 24px; height: 24px; }
.tapp-on { border-bottom-color: #999; }
.tapp-act { background: #333; border-bottom-color: #aaa; }
.tray { margin-left: auto; display: flex; align-items: center; gap: 10px; padding-right: 8px; }
.tr { width: 14px; height: 14px; flex: none; }
.clock { width: 62px; font: 12px/18px "Open Sans", sans-serif; text-align: center; color: #ddd; }
```
